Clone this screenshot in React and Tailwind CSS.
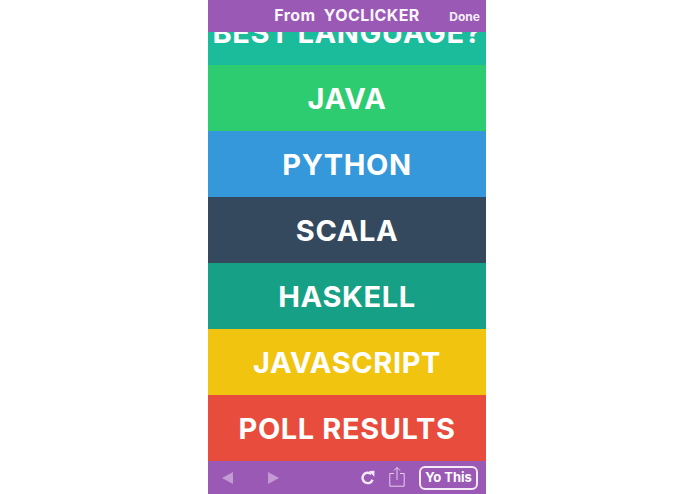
const rows = [
  { label: 'BEST LANGUAGE?', color: 'bg-[#1abc9c]' },
  { label: 'JAVA', color: 'bg-[#2ecc71]' },
  { label: 'PYTHON', color: 'bg-[#3498db]' },
  { label: 'SCALA', color: 'bg-[#34495e]' },
  { label: 'HASKELL', color: 'bg-[#16a085]' },
  { label: 'JAVASCRIPT', color: 'bg-[#f1c40f]' },
  { label: 'POLL RESULTS', color: 'bg-[#e74c3c]' },
]

export default function App() {
  return (
    <div className="h-[494px] w-[695px] bg-white font-['Inter',sans-serif]">
      <div className="ml-[208px] w-[278px] h-full flex flex-col text-white">

        {/* Top bar */}
        <div className="relative h-8 shrink-0 bg-[#9b59b6] flex items-center justify-center">
          <span className="font-bold text-[16px] whitespace-pre tracking-[0.4px] pb-[2px] opacity-95">From  YOCLICKER</span>
          <span className="absolute right-[6px] top-[10px] font-bold text-[12px] leading-[14px] opacity-90">Done</span>
        </div>

        {/* Answers */}
        <div className="flex-1 min-h-0 overflow-hidden flex flex-col justify-end">
          {rows.map(row => (
            <div key={row.label} className={`${row.color} h-[66px] shrink-0 flex items-center justify-center pt-[2px]`}>
              <span className="font-bold text-[29px] tracking-[0.6px] whitespace-nowrap">{row.label}</span>
            </div>
          ))}
        </div>

        {/* Bottom toolbar */}
        <div className="h-[33px] shrink-0 bg-[#9b59b6] flex items-center pl-[13px] pr-2">
          <svg width="13" height="14" viewBox="0 0 13 14" className="fill-[#c39bd3]"><path d="M1 7l11-6v12z" /></svg>
          <svg width="13" height="14" viewBox="0 0 13 14" className="fill-[#c39bd3] ml-[33px]"><path d="M12 7L1 1v12z" /></svg>
          <svg width="16" height="16" viewBox="0 0 16 16" fill="none" className="ml-auto">
            <path d="M12.6 9.8A5.2 5.2 0 1 1 11.2 4" stroke="#f3e9f7" strokeWidth="2.4" />
            <path d="M9 1l5.5-.2-.2 6z" fill="#f3e9f7" />
          </svg>
          <svg width="16" height="21" viewBox="0 0 16 21" fill="none" stroke="#e2cfea" strokeWidth="1" className="ml-[13px] -mt-[2px]">
            <path d="M5 7.5H.8v12.7h14.4V7.5H11" />
            <path d="M8 14V1.5M5 4.5l3-3 3 3" />
          </svg>
          <div className="ml-[14px] w-[59px] h-6 border-2 border-[#f3e9f7] rounded-[6px] flex items-center justify-center font-bold text-[13px] whitespace-nowrap">
            Yo This
          </div>
        </div>

      </div>
    </div>
  )
}
